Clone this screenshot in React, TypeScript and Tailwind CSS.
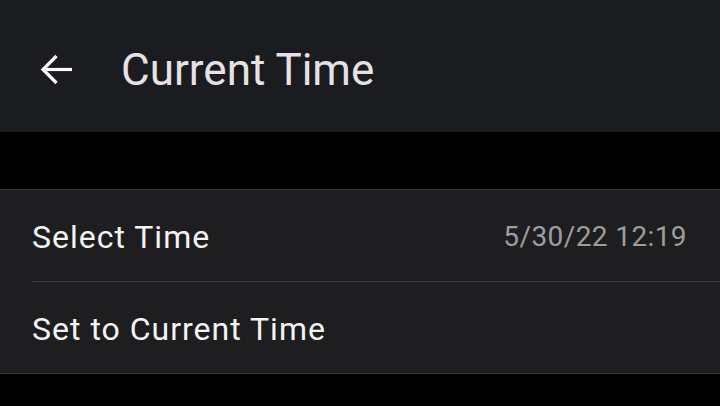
import { useState } from 'react'

function BackArrow() {
  return (
    <svg width="34" height="34" viewBox="0 0 34 34" fill="none" stroke="currentColor" strokeWidth="3.2" strokeLinecap="butt" strokeLinejoin="miter">
      <path d="M33 16.5H4" />
      <path d="M17.5 3 4 16.5 17.5 30" />
    </svg>
  )
}

function Row({ label, value, last }: { label: string; value?: string; last?: boolean }) {
  return (
    <button className="flex w-full flex-col bg-[#1e1e20] text-left">
      <div className="flex h-[91px] w-full items-center justify-between pl-8 pr-[33px] pt-[2px]">
        <span className="text-[32px] tracking-[1px] text-[#f4f4f4]">{label}</span>
        {value && <span className="text-[28px] tracking-[0.4px] text-[#9d9d9f]">{value}</span>}
      </div>
      {!last && <div className="ml-8 h-px bg-[#3a3a3c]" />}
    </button>
  )
}

export default function App() {
  const [time] = useState('5/30/22 12:19')

  return (
    <div className="flex h-[406px] w-[720px] flex-col bg-black font-['Roboto',sans-serif]">
      <header className="flex h-[132px] shrink-0 items-center bg-[#1b1c20] pt-[8px]">
        <div className="ml-[39px] text-white">
          <BackArrow />
        </div>
        <h1 className="ml-[48px] text-[44px] text-[#e6e1e5]">Current Time</h1>
      </header>

      <section className="mt-[57px] border-y border-[#3a3a3c]">
        <Row label="Select Time" value={time} />
        <Row label="Set to Current Time" last />
      </section>
    </div>
  )
}
